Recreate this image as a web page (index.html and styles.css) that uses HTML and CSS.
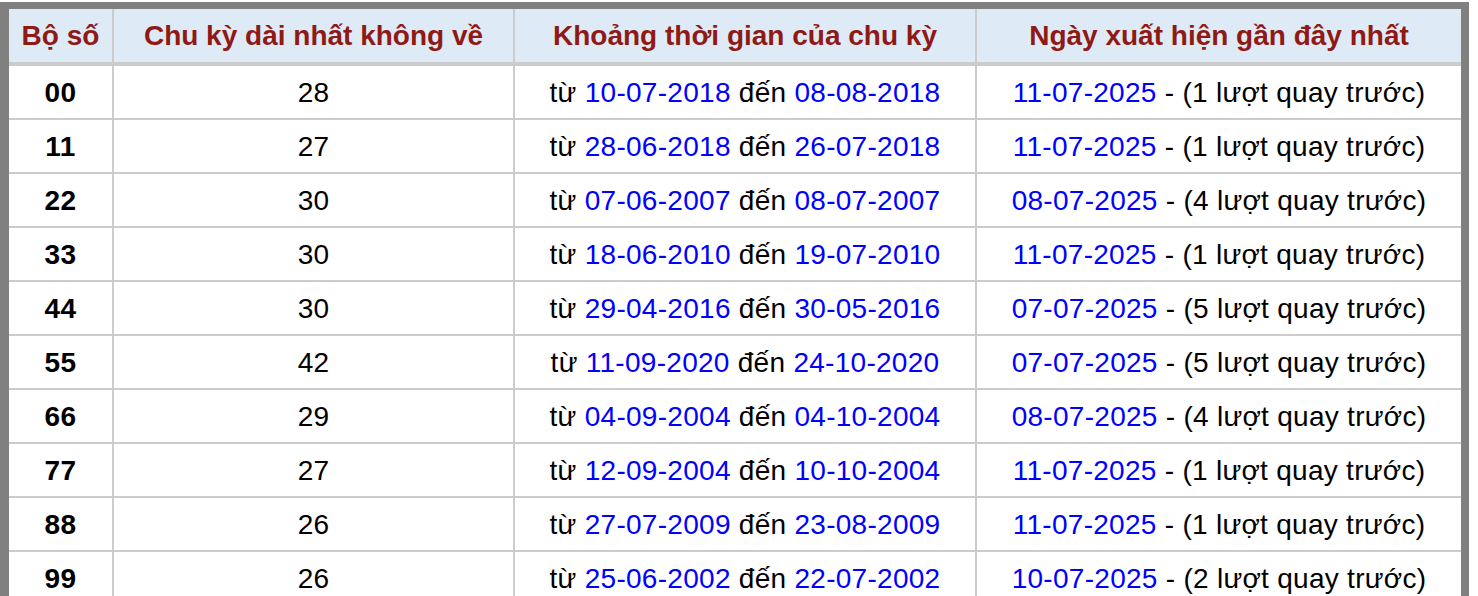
FILE: index.html
```html
<!DOCTYPE html>
<html lang="vi">
<head>
<meta charset="utf-8">
<title>Chu kỳ dài nhất không về</title>
<link rel="stylesheet" href="styles.css">
</head>
<body>
<div class="frame">
<table class="stats">
<thead>
<tr>
<th class="c1">Bộ số</th>
<th class="c2">Chu kỳ dài nhất không về</th>
<th class="c3">Khoảng thời gian của chu kỳ</th>
<th class="c4">Ngày xuất hiện gần đây nhất</th>
</tr>
</thead>
<tbody>
<tr><td class="num">00</td><td>28</td><td>từ <span class="d">10-07-2018</span> đến <span class="d">08-08-2018</span></td><td><span class="d">11-07-2025</span> - (1 lượt quay trước)</td></tr>
<tr><td class="num">11</td><td>27</td><td>từ <span class="d">28-06-2018</span> đến <span class="d">26-07-2018</span></td><td><span class="d">11-07-2025</span> - (1 lượt quay trước)</td></tr>
<tr><td class="num">22</td><td>30</td><td>từ <span class="d">07-06-2007</span> đến <span class="d">08-07-2007</span></td><td><span class="d">08-07-2025</span> - (4 lượt quay trước)</td></tr>
<tr><td class="num">33</td><td>30</td><td>từ <span class="d">18-06-2010</span> đến <span class="d">19-07-2010</span></td><td><span class="d">11-07-2025</span> - (1 lượt quay trước)</td></tr>
<tr><td class="num">44</td><td>30</td><td>từ <span class="d">29-04-2016</span> đến <span class="d">30-05-2016</span></td><td><span class="d">07-07-2025</span> - (5 lượt quay trước)</td></tr>
<tr><td class="num">55</td><td>42</td><td>từ <span class="d">11-09-2020</span> đến <span class="d">24-10-2020</span></td><td><span class="d">07-07-2025</span> - (5 lượt quay trước)</td></tr>
<tr><td class="num">66</td><td>29</td><td>từ <span class="d">04-09-2004</span> đến <span class="d">04-10-2004</span></td><td><span class="d">08-07-2025</span> - (4 lượt quay trước)</td></tr>
<tr><td class="num">77</td><td>27</td><td>từ <span class="d">12-09-2004</span> đến <span class="d">10-10-2004</span></td><td><span class="d">11-07-2025</span> - (1 lượt quay trước)</td></tr>
<tr><td class="num">88</td><td>26</td><td>từ <span class="d">27-07-2009</span> đến <span class="d">23-08-2009</span></td><td><span class="d">11-07-2025</span> - (1 lượt quay trước)</td></tr>
<tr><td class="num">99</td><td>26</td><td>từ <span class="d">25-06-2002</span> đến <span class="d">22-07-2002</span></td><td><span class="d">10-07-2025</span> - (2 lượt quay trước)</td></tr>
</tbody>
</table>
</div>
</body>
</html>
```
FILE: styles.css
```css
html, body {
  margin: 0;
  padding: 0;
  background: #ffffff;
}

body {
  padding-top: 2px;
  font-family: "Liberation Sans", Arial, Helvetica, sans-serif;
}

.frame {
  width: 1452px;
  border-style: solid;
  border-color: #808080;
  border-width: 7px 8px 7px 9px;
  background: #ffffff;
}

.stats {
  width: 1452px;
  table-layout: fixed;
  border-collapse: separate;
  border-spacing: 0;
  font-size: 28px;
}

.stats th,
.stats td {
  box-sizing: border-box;
  padding: 0;
  text-align: center;
  vertical-align: middle;
  white-space: nowrap;
  border-left: 2px solid #cccccc;
}

.stats th:first-child,
.stats td:first-child {
  border-left: none;
}

.stats th {
  height: 57px;
  background: #deeaf6;
  color: #8f1a15;
  font-weight: bold;
  border-bottom: 4px solid #cccccc;
  padding-top: 1px;
}

.stats td {
  height: 54px;
  color: #000000;
  border-bottom: 2px solid #cccccc;
  padding-top: 2px;
  letter-spacing: 0.28px;
}

.c1 { width: 103px; }
.c2 { width: 401px; }
.c3 { width: 462px; }
.c4 { width: 486px; }

.stats td.num {
  font-weight: bold;
  letter-spacing: 0.4px;
}

.d {
  color: #0000ff;
}
```
